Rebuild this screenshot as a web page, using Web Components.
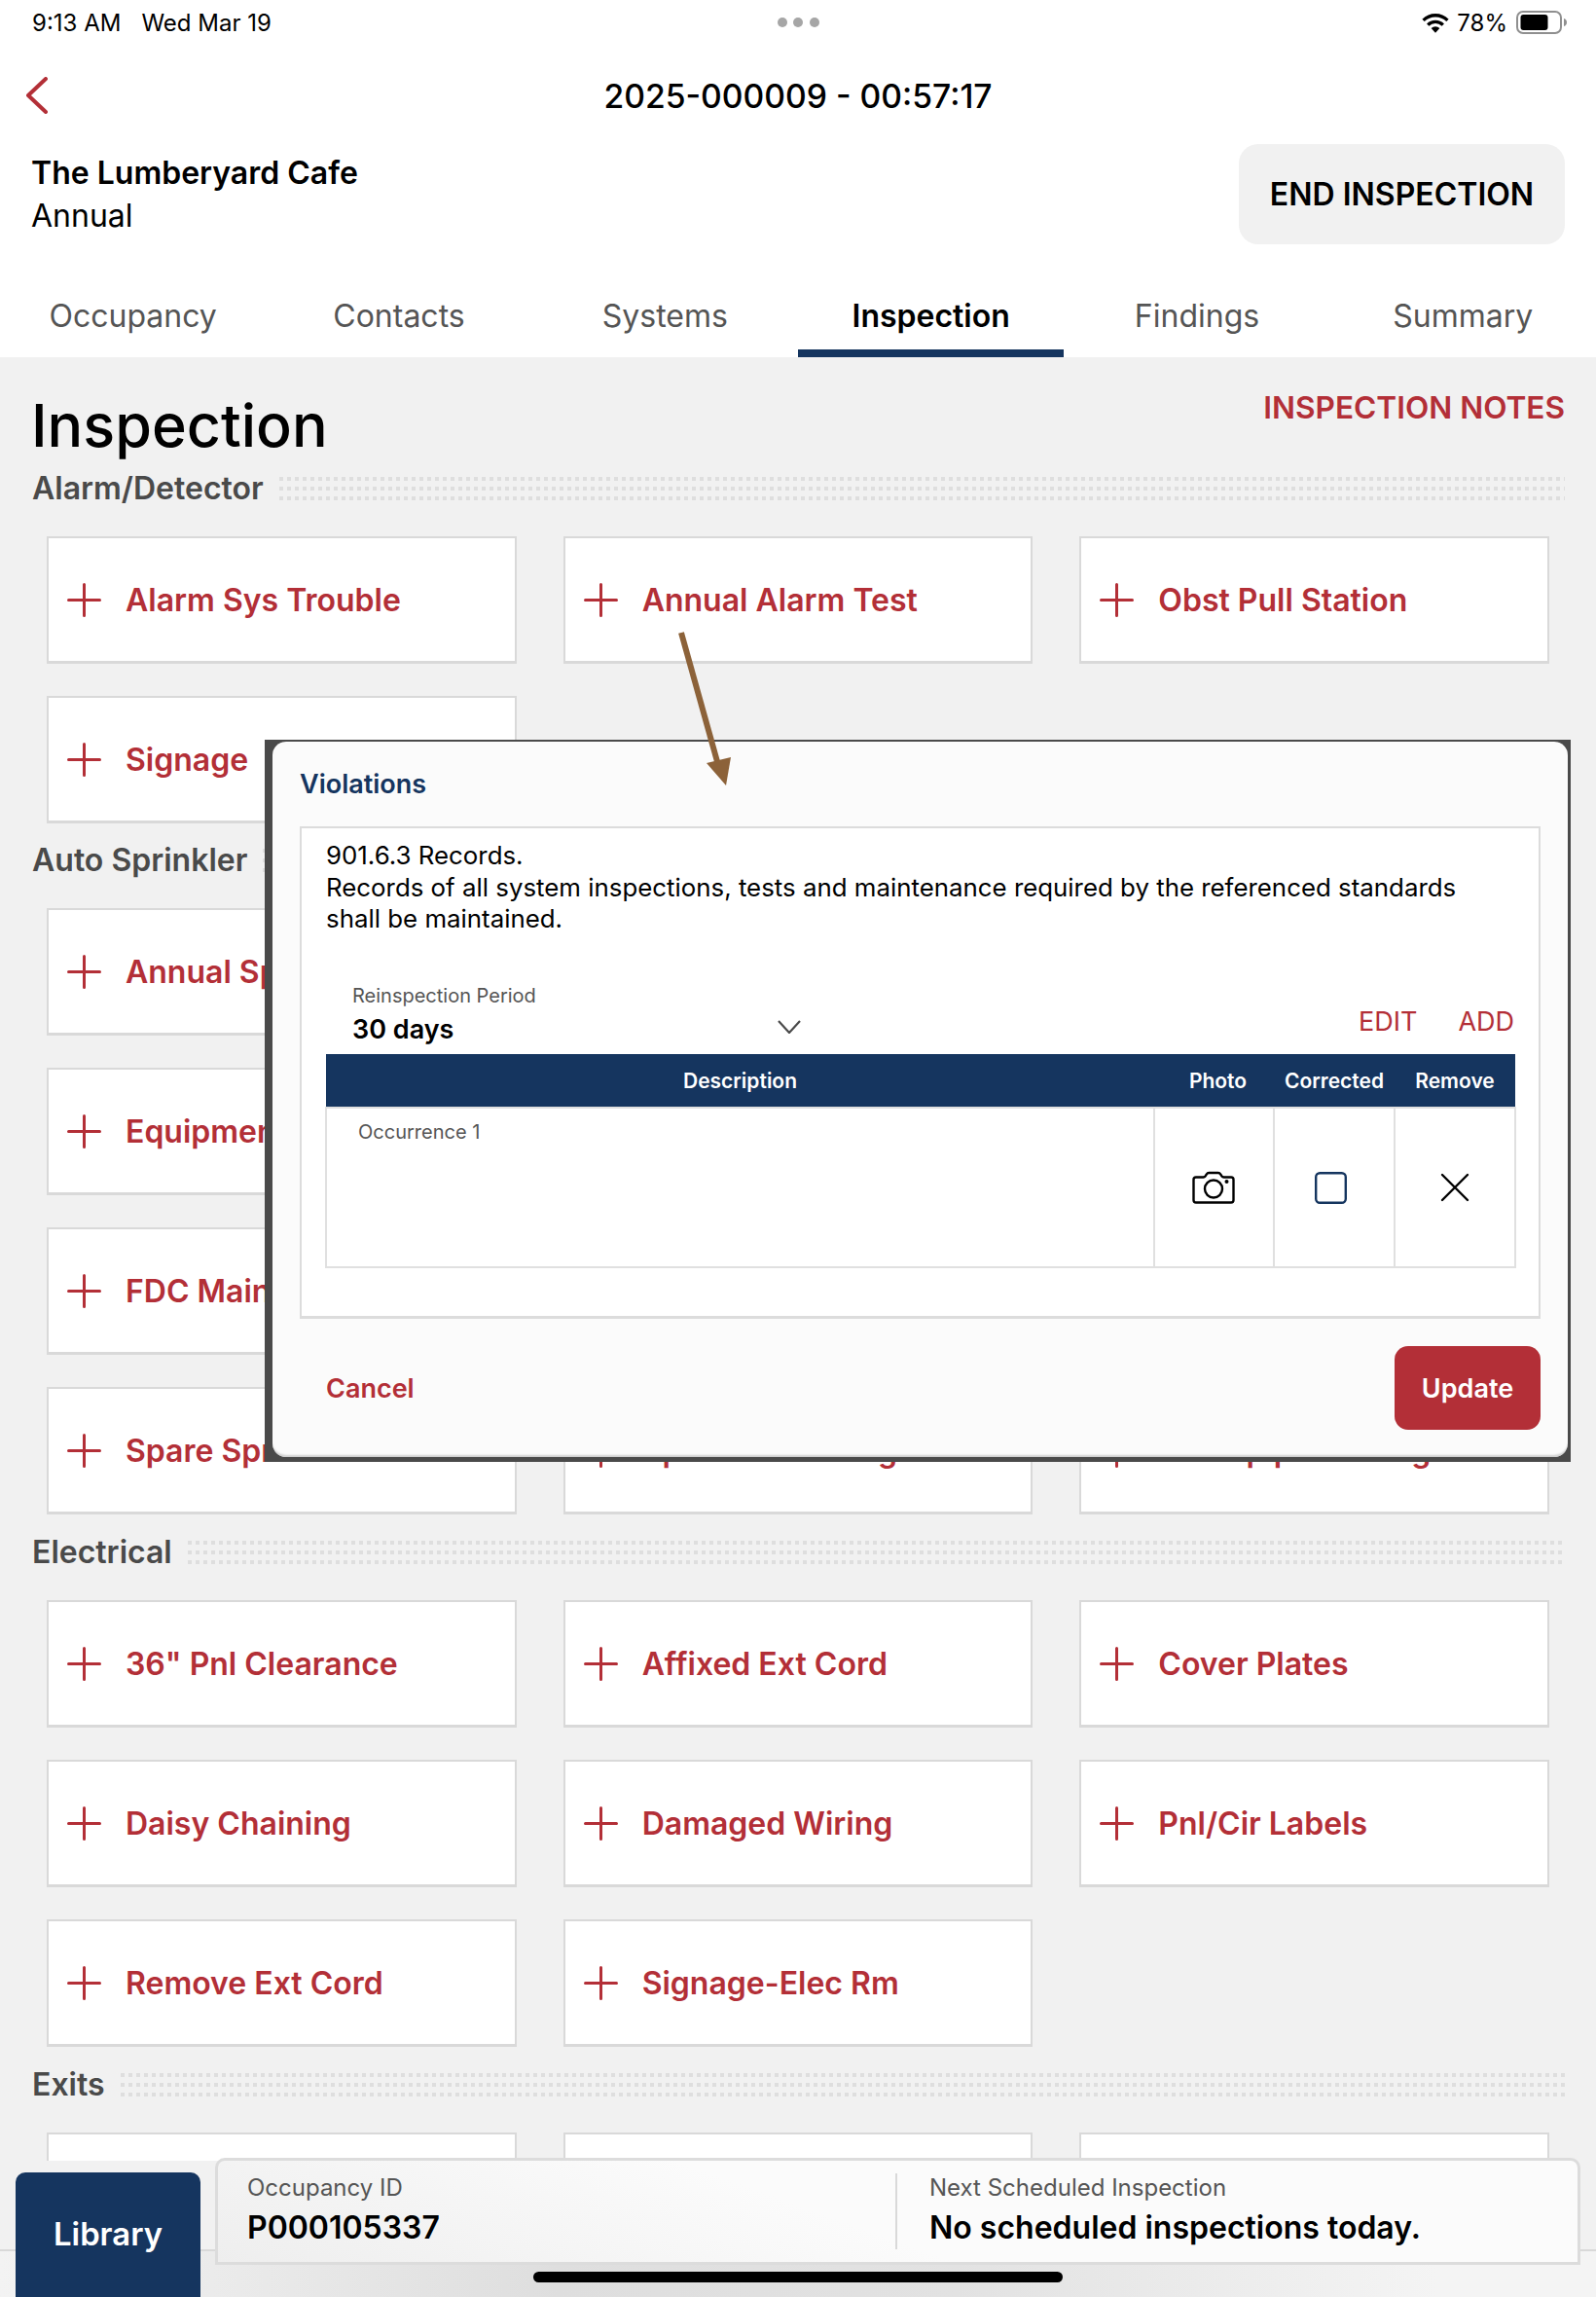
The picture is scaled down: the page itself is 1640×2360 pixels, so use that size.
<!DOCTYPE html>
<html lang="en">
<head>
<meta charset="utf-8">
<title>Inspection</title>
<style>
html, body {
  margin: 0;
  width: 1640px;
  height: 2360px;
  overflow: hidden;
  background: #f1f1f1;
  font-family: Inter, "Liberation Sans", sans-serif;
}
</style>
</head>
<body>
<status-bar></status-bar>
<app-header></app-header>
<tab-bar></tab-bar>
<page-title></page-title>

<inspection-section heading="Alarm/Detector" style="margin-bottom:-1px">
  <inspection-card>Alarm Sys Trouble</inspection-card>
  <inspection-card>Annual Alarm Test</inspection-card>
  <inspection-card>Obst Pull Station</inspection-card>
  <inspection-card>Signage</inspection-card>
</inspection-section>

<inspection-section heading="Auto Sprinkler">
  <inspection-card newrow>Annual Sprinkler</inspection-card>
  <inspection-card newrow>Equipment</inspection-card>
  <inspection-card newrow>FDC Main</inspection-card>
  <inspection-card newrow>Spare Sprinklers</inspection-card>
  <inspection-card>Sprinkler Testing</inspection-card>
  <inspection-card>Standpipe Testing</inspection-card>
</inspection-section>

<inspection-section heading="Electrical">
  <inspection-card>36" Pnl Clearance</inspection-card>
  <inspection-card>Affixed Ext Cord</inspection-card>
  <inspection-card>Cover Plates</inspection-card>
  <inspection-card>Daisy Chaining</inspection-card>
  <inspection-card>Damaged Wiring</inspection-card>
  <inspection-card>Pnl/Cir Labels</inspection-card>
  <inspection-card>Remove Ext Cord</inspection-card>
  <inspection-card>Signage-Elec Rm</inspection-card>
</inspection-section>

<inspection-section heading="Exits">
  <inspection-card></inspection-card>
  <inspection-card></inspection-card>
  <inspection-card></inspection-card>
</inspection-section>

<violations-dialog></violations-dialog>
<annotation-arrow></annotation-arrow>
<bottom-bar></bottom-bar>

<script>
class StatusBar extends HTMLElement {
  constructor() {
    super();
    this.attachShadow({ mode: "open" });
    this.shadowRoot.innerHTML = `
<style>
:host {
  display: flex;
  align-items: center;
  justify-content: flex-end;
  height: 46px;
  padding: 0 30px 0 33px;
  background: #fff;
  color: #000;
  font-size: 24px;
  position: relative;
}
.left { margin-right: auto; }
.date { margin-left: 21px; }
.dots {
  position: absolute;
  left: 0;
  right: 0;
  top: 18px;
  display: flex;
  justify-content: center;
  gap: 6.5px;
}
.dots i {
  width: 10px;
  height: 10px;
  border-radius: 50%;
  background: #a6a6a6;
}
.pct { margin: 0 9px 0 8px; }
svg { display: block; }
</style>
<div class="left"><span>9:13 AM</span><span class="date">Wed Mar 19</span></div>
<div class="dots"><i></i><i></i><i></i></div>
<svg width="28" height="21" viewBox="0 0 27 20" fill="none" stroke="#000" stroke-width="3.2">
  <path d="M1.5 7.5A17 17 0 0 1 25.5 7.5"/>
  <path d="M6 12A10.5 10.5 0 0 1 21 12"/>
  <path d="M13.5 19.8L9.3 15.4a6 6 0 0 1 8.4 0z" fill="#000" stroke="none"/>
</svg>
<span class="pct">78%</span>
<svg width="52" height="24" viewBox="0 0 52 24">
  <rect x="1" y="1" width="45" height="22" rx="6" fill="none" stroke="#8f8f8f" stroke-width="2"/>
  <rect x="4.5" y="4" width="28" height="16" rx="3" fill="#000"/>
  <path d="M49 8c1.8.5 3 2 3 4s-1.2 3.5-3 4z" fill="#8f8f8f"/>
</svg>
`;
  }
}

class AppHeader extends HTMLElement {
  constructor() {
    super();
    this.attachShadow({ mode: "open" });
    this.shadowRoot.innerHTML = `
<style>
:host {
  display: block;
  background: #fff;
  color: #000;
  height: 249px;
}
.top {
  display: grid;
  grid-template-columns: 1fr auto 1fr;
  align-items: center;
  height: 104px;
  padding: 0 27px;
}
.title {
  font-size: 33.7px;
  font-weight: 500;
  white-space: nowrap;
}
.info {
  display: flex;
  justify-content: space-between;
  align-items: flex-start;
  margin-top: -2px;
  padding: 0 32px 0 32px;
}
.name {
  font-size: 32px;
  font-weight: 600;
  line-height: 44px;
  margin-top: 8px;
}
.type {
  font-size: 32px;
  line-height: 44px;
}
button {
  width: 335px;
  height: 103px;
  border: 0;
  border-radius: 20px;
  background: #f1f1f1;
  color: #000;
  font: 600 32px Inter, "Liberation Sans", sans-serif;
  padding: 0;
}
</style>
<div class="top">
  <svg width="22" height="38" viewBox="0 0 22 38" fill="none" stroke="#b32f37" stroke-width="4" stroke-linecap="round" stroke-linejoin="round"><path d="M20 2L2 19l18 17"/></svg>
  <div class="title">2025-000009 - 00:57:17</div>
  <span></span>
</div>
<div class="info">
  <div>
    <div class="name">The Lumberyard Cafe</div>
    <div class="type">Annual</div>
  </div>
  <button>END INSPECTION</button>
</div>
`;
  }
}

class TabBar extends HTMLElement {
  constructor() {
    super();
    this.attachShadow({ mode: "open" });
    const tabs = ["Occupancy", "Contacts", "Systems", "Inspection", "Findings", "Summary"];
    this.shadowRoot.innerHTML = `
<style>
:host {
  display: grid;
  grid-template-columns: repeat(6, 1fr);
  height: 72px;
  background: #fff;
}
div {
  display: flex;
  justify-content: center;
  align-items: flex-start;
  padding-top: 9px;
  box-sizing: border-box;
  font-size: 32px;
  line-height: 42px;
  color: #555;
}
.active {
  color: #000;
  font-weight: 600;
  border-bottom: 8px solid #15355f;
}
</style>
${tabs.map((t) => `<div class="${t === "Inspection" ? "active" : ""}">${t}</div>`).join("")}
`;
  }
}

class PageTitle extends HTMLElement {
  constructor() {
    super();
    this.attachShadow({ mode: "open" });
    this.shadowRoot.innerHTML = `
<style>
:host {
  display: flex;
  justify-content: space-between;
  align-items: flex-start;
  height: 120px;
  padding: 0 32px 0 32px;
}
h1 {
  margin: 34px 0 0;
  font-size: 61px;
  line-height: 72px;
  font-weight: 500;
  color: #000;
}
a {
  margin-top: 32px;
  font-size: 31.6px;
  line-height: 40px;
  font-weight: 600;
  color: #b32f37;
}
</style>
<h1>Inspection</h1>
<a>INSPECTION NOTES</a>
`;
  }
}

let sectionTemplate = document.createElement("template");
sectionTemplate.innerHTML = `
<style>
:host {
  display: block;
  padding-bottom: 24px;
}
.head {
  display: flex;
  align-items: center;
  gap: 16px;
  height: 30px;
  padding: 0 32px 0 33px;
  margin-bottom: 34px;
}
h2 {
  margin: 0;
  font-size: 32px;
  line-height: 30px;
  font-weight: 600;
  color: #4a4a4a;
  white-space: nowrap;
}
.dots {
  flex: 1;
  height: 24px;
  background: repeating-linear-gradient(90deg, #dedede 0 4px, transparent 4px 8px);
  -webkit-mask-image: repeating-linear-gradient(180deg, #000 0 4px, transparent 4px 10px);
  mask-image: repeating-linear-gradient(180deg, #000 0 4px, transparent 4px 10px);
}
.grid {
  display: grid;
  grid-template-columns: repeat(3, 1fr);
  gap: 33px 48px;
  padding: 0 48px;
}
</style>
<div class="head"><h2></h2><div class="dots"></div></div>
<div class="grid"><slot></slot></div>
`;

class InspectionSection extends HTMLElement {
  constructor() {
    super();
    this.attachShadow({ mode: "open" });
    this.shadowRoot.appendChild(sectionTemplate.content.cloneNode(true));
  }

  connectedCallback() {
    this.shadowRoot.querySelector("h2").textContent = this.getAttribute("heading");
  }
}

let cardTemplate = document.createElement("template");
cardTemplate.innerHTML = `
<style>
:host {
  display: flex;
  align-items: center;
  gap: 25px;
  height: 131px;
  box-sizing: border-box;
  padding-left: 19px;
  background: #fff;
  border: 2px solid #d9d9d9;
  border-bottom-width: 3px;
  color: #b32f37;
  font-size: 32px;
  font-weight: 600;
  white-space: nowrap;
  min-width: 0;
}
:host([newrow]) { grid-column: 1; }
svg { flex: none; }
</style>
<svg width="35" height="35" viewBox="0 0 35 35" stroke="#b32f37" stroke-width="3" stroke-linecap="round"><path d="M17.5 1.5v32M1.5 17.5h32"/></svg>
<span><slot></slot></span>
`;

class InspectionCard extends HTMLElement {
  constructor() {
    super();
    this.attachShadow({ mode: "open" });
    this.shadowRoot.appendChild(cardTemplate.content.cloneNode(true));
  }
}

let dialogTemplate = document.createElement("template");
dialogTemplate.innerHTML = `
<style>
:host {
  position: absolute;
  left: 272px;
  top: 760px;
  width: 1342px;
  height: 742px;
  box-sizing: border-box;
  padding: 2px 3px 5px 8px;
  background: #4a4a4a;
  color: #000;
}
.card {
  height: 100%;
  box-sizing: border-box;
  padding: 0 28px;
  background: #fbfbfb;
  border-radius: 14px;
  box-shadow: inset 0 -3px 2px -1px #cfcfcf;
  display: flex;
  flex-direction: column;
}
h3 {
  margin: 0;
  height: 87px;
  padding-top: 26px;
  box-sizing: border-box;
  font-size: 27px;
  line-height: 36px;
  font-weight: 600;
  color: #15355f;
}
.box {
  height: 506px;
  box-sizing: border-box;
  background: #fff;
  border: 2px solid #dcdcdc;
  border-bottom-width: 3px;
  padding: 12px 25px 0;
}
.code {
  font-size: 25.85px;
  line-height: 32.5px;
  height: 97px;
  white-space: nowrap;
}
.period {
  display: flex;
  align-items: flex-end;
  justify-content: space-between;
  box-sizing: border-box;
  height: 75px;
  padding: 0 0 7px 27px;
  margin-top: 48px;
}
.select {
  width: 461px;
  position: relative;
}
.select label {
  display: block;
  font-size: 20px;
  line-height: 28px;
  color: #555;
}
.select b {
  display: block;
  font-size: 27px;
  line-height: 36px;
  font-weight: 600;
  margin-top: 3px;
}
.select svg {
  position: absolute;
  right: 0;
  bottom: 14px;
}
.links {
  display: flex;
  gap: 42px;
  font-size: 27px;
  line-height: 36px;
  color: #b32f37;
  padding: 0 0 8px 0;
}
table {
  width: 1222px;
  margin-left: -1px;
  border-collapse: collapse;
  table-layout: fixed;
}
th {
  height: 54px;
  padding: 0;
  background: #15355f;
  color: #fff;
  font-size: 21px;
  font-weight: 600;
}
th.photo { padding-left: 8px; }
td {
  height: 162px;
  padding: 0;
  border: 2px solid #e0e0e0;
  text-align: center;
  vertical-align: middle;
}
td.desc {
  vertical-align: top;
  text-align: left;
  padding: 10px 0 0 32px;
  font-size: 20px;
  line-height: 28px;
  color: #555;
  box-sizing: border-box;
}
td svg { display: block; margin: 0 auto; }
.actions {
  display: flex;
  justify-content: space-between;
  align-items: center;
  padding: 28px 0 0 27px;
}
.actions a {
  font-size: 27px;
  font-weight: 600;
  color: #b32f37;
}
button {
  width: 150px;
  height: 86px;
  border: 0;
  border-radius: 14px;
  background: #b32f37;
  color: #fff;
  padding: 0;
  font: 600 27px Inter, "Liberation Sans", sans-serif;
}
</style>
<div class="card">
  <h3>Violations</h3>
  <div class="box">
    <div class="code">901.6.3 Records.<br>Records of all system inspections, tests and maintenance required by the referenced standards<br>shall be maintained.</div>
    <div class="period">
      <div class="select">
        <label>Reinspection Period</label>
        <b>30 days</b>
        <svg width="24" height="14" viewBox="0 0 24 14" fill="none" stroke="#4a4a4a" stroke-width="2.2"><path d="M1 1l11 12L23 1"/></svg>
      </div>
      <div class="links"><span>EDIT</span><span>ADD</span></div>
    </div>
    <table>
      <colgroup><col style="width:851px"><col style="width:123px"><col style="width:124px"><col style="width:124px"></colgroup>
      <tr><th>Description</th><th class="photo">Photo</th><th>Corrected</th><th>Remove</th></tr>
      <tr>
        <td class="desc">Occurrence 1</td>
        <td>
          <svg width="44" height="34" viewBox="0 0 44 34" fill="none" stroke="#000" stroke-width="2.4" stroke-linejoin="round" style="transform:translateX(-1px)">
            <path d="M4 6.5h7.5c1 0 1.6-.5 2.2-1.3l1-1.6C15.4 2.5 16 2 17.2 2h9.6c1.2 0 1.8.5 2.5 1.6l1 1.6c.6.8 1.2 1.3 2.2 1.3H40c1.4 0 2.5 1.1 2.5 2.5v21c0 1.4-1.1 2.5-2.5 2.5H4c-1.4 0-2.5-1.1-2.5-2.5V9c0-1.4 1.1-2.5 2.5-2.5z"/>
            <circle cx="22" cy="18.5" r="9"/>
            <circle cx="35.5" cy="11" r="2" fill="#000" stroke="none"/>
          </svg>
        </td>
        <td>
          <svg width="33" height="33" viewBox="0 0 33 33" fill="none" stroke="#15355f" stroke-width="2.4" style="transform:translateX(-4px)"><rect x="1.2" y="1.2" width="30.6" height="30.6" rx="4"/></svg>
        </td>
        <td>
          <svg width="30" height="30" viewBox="0 0 30 30" fill="none" stroke="#000" stroke-width="2.4" stroke-linecap="round"><path d="M2 2l26 26M28 2L2 28"/></svg>
        </td>
      </tr>
    </table>
  </div>
  <div class="actions">
    <a>Cancel</a>
    <button>Update</button>
  </div>
</div>
`;

class ViolationsDialog extends HTMLElement {
  constructor() {
    super();
    this.attachShadow({ mode: "open" });
    this.shadowRoot.appendChild(dialogTemplate.content.cloneNode(true));
  }
}

class AnnotationArrow extends HTMLElement {
  constructor() {
    super();
    this.attachShadow({ mode: "open" });
    this.shadowRoot.innerHTML = `
<style>
:host {
  position: absolute;
  left: 690px;
  top: 640px;
  width: 80px;
  height: 180px;
}
svg { display: block; }
</style>
<svg width="80" height="180" viewBox="0 0 80 180">
  <path d="M10 10L48 146" stroke="#8c6239" stroke-width="6"/>
  <path d="M56 167L36 144L61 138z" fill="#8c6239"/>
</svg>
`;
  }
}

class BottomBar extends HTMLElement {
  constructor() {
    super();
    this.attachShadow({ mode: "open" });
    this.shadowRoot.innerHTML = `
<style>
:host {
  position: absolute;
  left: 0;
  top: 2220px;
  width: 1640px;
  height: 140px;
  box-sizing: border-box;
  display: flex;
  align-items: flex-start;
  gap: 16px;
  padding-left: 16px;
  background:
    linear-gradient(#f1f1f1 0 91px, #d9d9d9 91px 93px, transparent 93px),
    linear-gradient(90deg, #f3f3f3, #dedede 35%, #e2e2e2 60%, #f4f4f4 90%);
}
.library {
  width: 190px;
  height: 128px;
  margin-top: 12px;
  box-sizing: border-box;
  padding-top: 43px;
  border-radius: 10px 10px 0 0;
  background: #15355f;
  color: #fff;
  font-size: 32.8px;
  line-height: 40px;
  font-weight: 600;
  text-align: center;
}
.info {
  width: 1403px;
  height: 110px;
  margin-top: -3px;
  margin-left: -1px;
  box-sizing: border-box;
  display: flex;
  padding-top: 13px;
  border: 3px solid #dcdcdc;
  border-bottom-width: 3px;
  border-radius: 10px 10px 0 0;
  background: linear-gradient(20deg, #eeeeee, #fbfbfb 45%, #fbfbfb);
}
.cell {
  box-sizing: border-box;
  height: 78px;
  padding-left: 30px;
}
.cell:first-child { width: 698px; border-right: 2px solid #d9d9d9; }
.cell:last-child { padding-left: 33px; }
label {
  display: block;
  font-size: 24px;
  line-height: 30px;
  color: #555;
}
b {
  display: block;
  margin-top: 7px;
  font-size: 32px;
  line-height: 38px;
  font-weight: 600;
  color: #000;
}
.home {
  position: absolute;
  left: 548px;
  top: 114px;
  width: 544px;
  height: 11px;
  border-radius: 6px;
  background: #000;
}
</style>
<div class="library">Library</div>
<div class="info">
  <div class="cell"><label>Occupancy ID</label><b>P000105337</b></div>
  <div class="cell"><label>Next Scheduled Inspection</label><b>No scheduled inspections today.</b></div>
</div>
<div class="home"></div>
`;
  }
}

window.customElements.define("status-bar", StatusBar);
window.customElements.define("app-header", AppHeader);
window.customElements.define("tab-bar", TabBar);
window.customElements.define("page-title", PageTitle);
window.customElements.define("inspection-section", InspectionSection);
window.customElements.define("inspection-card", InspectionCard);
window.customElements.define("violations-dialog", ViolationsDialog);
window.customElements.define("annotation-arrow", AnnotationArrow);
window.customElements.define("bottom-bar", BottomBar);
</script>
</body>
</html>
